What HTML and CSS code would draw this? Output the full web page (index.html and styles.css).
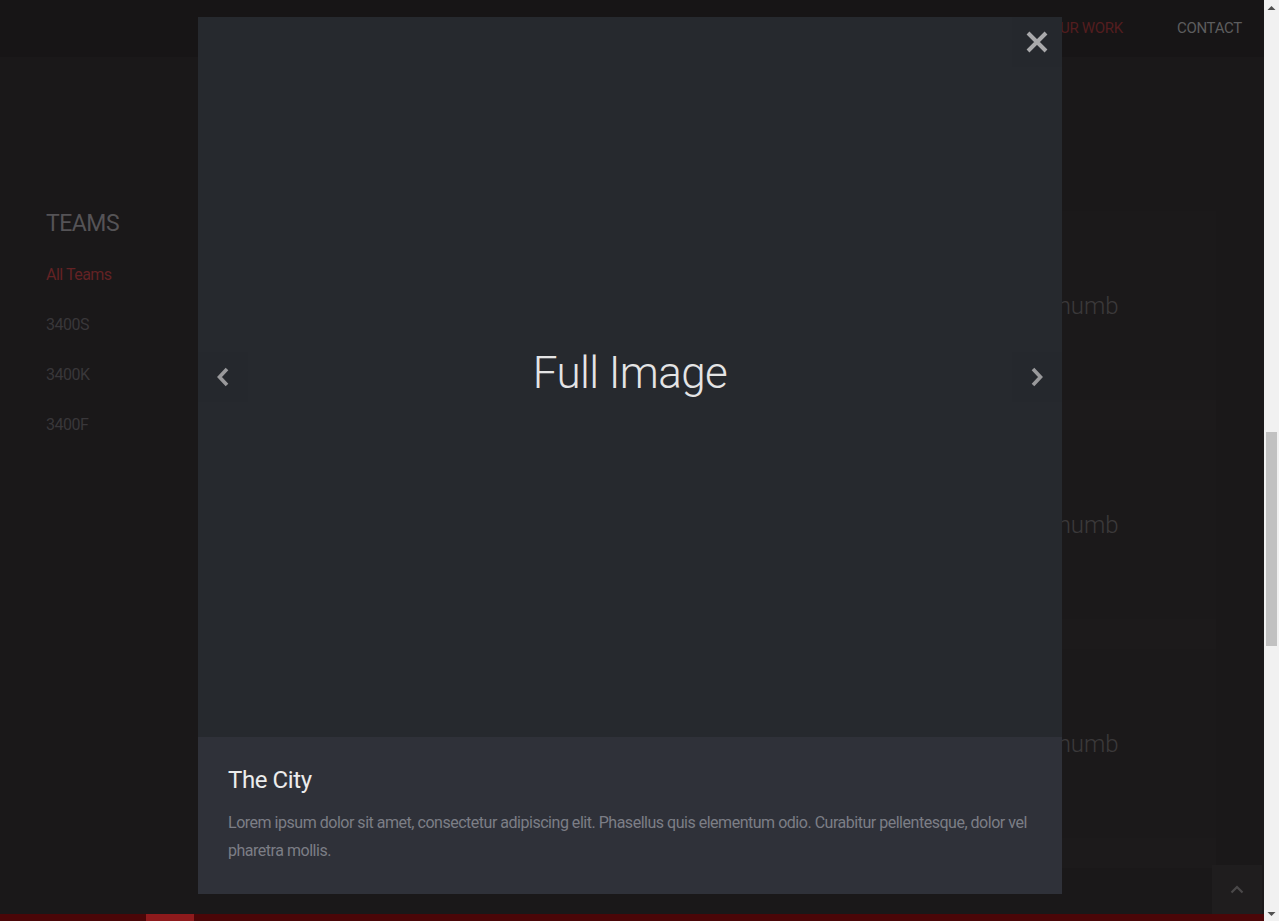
FILE: index.html
```html
<!DOCTYPE html>
<html lang="en">
<head>
<meta charset="utf-8">
<title>Our Work</title>
<link rel="stylesheet" href="styles.css">
</head>
<body>
<div class="page">
  <header class="site-header">
    <nav class="main-nav">
      <a class="nav-link" href="#">HOME</a>
      <a class="nav-link" href="#">ABOUT</a>
      <a class="nav-link nav-active" href="#">OUR WORK</a>
      <a class="nav-link" href="#">CONTACT</a>
    </nav>
  </header>

  <main class="portfolio">
    <div class="container">
      <aside class="sidebar">
        <h2 class="sidebar-title">TEAMS</h2>
        <ul class="filter-list">
          <li class="filter filter-active">All Teams</li>
          <li class="filter">3400S</li>
          <li class="filter">3400K</li>
          <li class="filter">3400F</li>
        </ul>
      </aside>
      <div class="thumbs">
        <div class="card"><div class="card-img">Thumb</div><div class="card-foot"></div></div>
        <div class="card"><div class="card-img">Thumb</div><div class="card-foot"></div></div>
        <div class="card"><div class="card-img">Thumb</div><div class="card-foot"></div></div>
        <div class="card"><div class="card-img">Thumb</div><div class="card-foot"></div></div>
        <div class="card"><div class="card-img">Thumb</div><div class="card-foot"></div></div>
        <div class="card"><div class="card-img">Thumb</div><div class="card-foot"></div></div>
        <div class="card"><div class="card-img">Thumb</div><div class="card-foot"></div></div>
        <div class="card"><div class="card-img">Thumb</div><div class="card-foot"></div></div>
        <div class="card"><div class="card-img">Thumb</div><div class="card-foot"></div></div>
      </div>
    </div>
  </main>

  <footer class="site-footer">
    <span class="footer-accent"></span>
  </footer>

  <a class="to-top" href="#">
    <svg width="14" height="9" viewBox="0 0 14 9"><path d="M1.5 7.5 L7 2 L12.5 7.5" fill="none" stroke="#4a4849" stroke-width="2.2"/></svg>
  </a>

  <div class="lightbox">
    <div class="lb-modal">
      <div class="lb-image">
        <span class="lb-placeholder">Full Image</span>
        <button class="lb-close" aria-label="Close">
          <svg width="22" height="22" viewBox="0 0 22 22"><path d="M2 2 L20 20 M20 2 L2 20" stroke="#a9a9ab" stroke-width="4" fill="none"/></svg>
        </button>
        <button class="lb-nav lb-prev" aria-label="Previous">
          <svg width="14" height="20" viewBox="0 0 14 20"><path d="M11 2 L3.5 10 L11 18" stroke="#99999b" stroke-width="3.6" fill="none"/></svg>
        </button>
        <button class="lb-nav lb-next" aria-label="Next">
          <svg width="14" height="20" viewBox="0 0 14 20"><path d="M3 2 L10.5 10 L3 18" stroke="#99999b" stroke-width="3.6" fill="none"/></svg>
        </button>
      </div>
      <div class="lb-caption">
        <h3 class="lb-title">The City</h3>
        <p class="lb-text">Lorem ipsum dolor sit amet, consectetur adipiscing elit. Phasellus quis elementum odio. Curabitur pellentesque, dolor vel pharetra mollis.</p>
      </div>
    </div>
  </div>
</div>

<div class="scrollbar">
  <div class="sb-btn">
    <svg width="9" height="6" viewBox="0 0 9 6"><path d="M0.5 5 L4.5 1 L8.5 5 Z" fill="#505050"/></svg>
  </div>
  <div class="sb-track"><div class="sb-thumb"></div></div>
  <div class="sb-btn">
    <svg width="9" height="6" viewBox="0 0 9 6"><path d="M0.5 1 L4.5 5 L8.5 1 Z" fill="#505050"/></svg>
  </div>
</div>
</body>
</html>
```

FILE: styles.css
```css
html, body {
  margin: 0;
  padding: 0;
  height: 100%;
  overflow: hidden;
}
body {
  display: flex;
  background: #1a1819;
  font-family: "Roboto", "Open Sans", sans-serif;
  color: #3a3839;
}

.page {
  flex: 1;
  position: relative;
  display: flex;
  flex-direction: column;
  overflow: hidden;
  min-width: 0;
}

.site-header {
  height: 57px;
  flex: none;
  background: #171516;
  display: flex;
  justify-content: flex-end;
  align-items: center;
  padding: 0 22px 2px 0;
  box-sizing: border-box;
}
.main-nav {
  display: flex;
  gap: 54px;
}
.nav-link {
  font-size: 15px;
  color: #5d5d5e;
  text-decoration: none;
  letter-spacing: -0.3px;
}
.nav-active {
  color: #531d1f;
}

.portfolio {
  flex: 1;
  padding-top: 154px;
}
.container {
  width: 1170px;
  margin: 0 auto;
  display: grid;
  grid-template-columns: 270px 1fr;
  column-gap: 30px;
  position: relative;
  left: -1px;
}
.sidebar-title {
  margin: 0;
  font-size: 23px;
  line-height: 26px;
  font-weight: 400;
  color: #555356;
  letter-spacing: -0.5px;
}
.filter-list {
  list-style: none;
  margin: 13px 0 0;
  padding: 0;
}
.filter {
  font-size: 16px;
  line-height: 50px;
  color: #39373a;
  letter-spacing: -0.5px;
}
.filter-active {
  color: #632224;
}

.thumbs {
  display: grid;
  grid-template-columns: repeat(3, 1fr);
  column-gap: 30px;
}
.card {
  display: flex;
  flex-direction: column;
  background: #1b191a;
}
.card-img {
  height: 189px;
  display: flex;
  align-items: center;
  justify-content: center;
  font-size: 24px;
  font-weight: 300;
  color: #3b393a;
}
.card-foot {
  height: 30px;
  background: #1c1a1b;
}

.site-footer {
  flex: none;
  height: 7px;
  background: #4b0608;
  display: flex;
}
.footer-accent {
  margin-left: 146px;
  width: 48px;
  background: #8e1a1c;
}

.to-top {
  position: absolute;
  right: 2px;
  bottom: 7px;
  width: 50px;
  height: 49px;
  background: #1f1d1e;
  display: flex;
  align-items: center;
  justify-content: center;
}

.lightbox {
  position: absolute;
  inset: 0;
  display: flex;
  justify-content: center;
  align-items: flex-start;
  padding: 17px 4px 0 0;
}
.lb-modal {
  width: 864px;
  display: flex;
  flex-direction: column;
}
.lb-image {
  position: relative;
  height: 720px;
  background: #26292e;
  display: flex;
  align-items: center;
  justify-content: center;
}
.lb-placeholder {
  font-size: 44px;
  font-weight: 300;
  color: #e4e4e5;
  letter-spacing: -0.6px;
  margin-top: -9px;
}
.lb-close {
  position: absolute;
  top: 0;
  right: 0;
  width: 50px;
  height: 50px;
  border: 0;
  padding: 0;
  background: rgba(0, 0, 0, 0.02);
  display: flex;
  align-items: center;
  justify-content: center;
}
.lb-nav {
  position: absolute;
  top: 335px;
  width: 50px;
  height: 50px;
  border: 0;
  padding: 0;
  background: rgba(0, 0, 0, 0.02);
  display: flex;
  align-items: center;
  justify-content: center;
}
.lb-prev {
  left: 0;
}
.lb-next {
  right: 0;
}
.lb-caption {
  background: #2f3139;
  padding: 25px 30px 29px;
}
.lb-title {
  margin: 0;
  font-size: 24px;
  line-height: 36px;
  font-weight: 400;
  color: #ececec;
  letter-spacing: -0.4px;
}
.lb-text {
  margin: 11px 0 0;
  font-size: 16px;
  line-height: 28px;
  color: #7c7e86;
  letter-spacing: -0.48px;
}

.scrollbar {
  flex: none;
  width: 15px;
  background: #f1f1f1;
  display: flex;
  flex-direction: column;
}
.sb-btn {
  height: 15px;
  flex: none;
  display: flex;
  align-items: center;
  justify-content: center;
}
.sb-track {
  flex: 1;
  padding: 0 2px;
}
.sb-thumb {
  margin-top: 417px;
  height: 214px;
  background: #c1c1c1;
}
```
